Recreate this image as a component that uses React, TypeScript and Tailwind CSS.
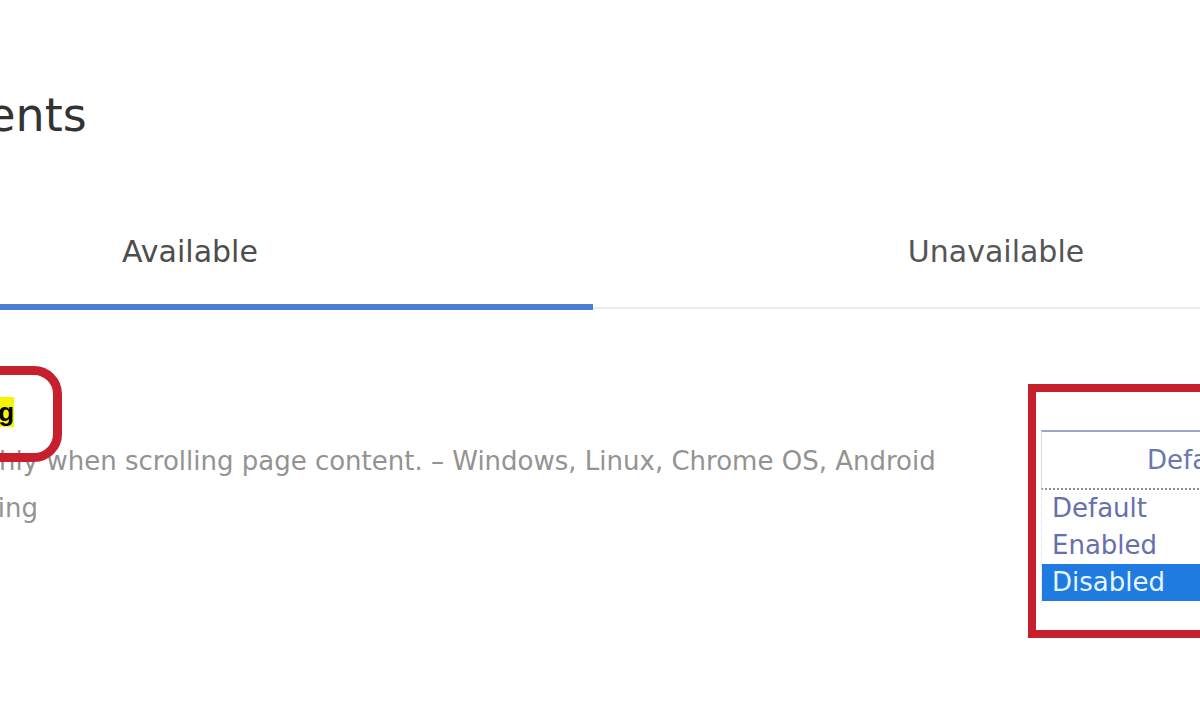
const options = ['Default', 'Enabled', 'Disabled'];

function Tabs() {
    return (
        <nav className="mt-[99px] flex items-start">
            <div className="flex-1 border-b-[6px] border-[#4a80d4] pb-[35px] text-center">
                <span className="text-[30px] leading-[30px] text-[#4d4d4d]">Available</span>
            </div>
            <div className="flex-1 border-b-2 border-[#ebebeb] pb-[38px] text-center">
                <span className="text-[30px] leading-[30px] text-[#555]">Unavailable</span>
            </div>
        </nav>
    );
}

function FlagSelect() {
    return (
        <div className="relative mt-[31px] mr-[52px] w-[306px]">
            <div className="flex h-[58px] items-center justify-center border-t-2 border-l border-t-[#9ba7c6] border-l-[#d4d8e4] bg-white">
                <span className="text-[26px] leading-[26px] text-[#6a78b0]">Default</span>
            </div>
            <ul className="absolute top-full left-0 w-full border-t-2 border-l border-dotted border-t-[#8d8d95] border-l-[#d4d8e4] bg-white pb-[4px]">
                {options.map((opt) => {
                    const selected = opt === 'Disabled';
                    return (
                        <li
                            key={opt}
                            className={
                                selected
                                    ? 'h-[37px] bg-[#1f7be0] pl-[10px] text-[26px] leading-[37px] text-[#e6f5ff]'
                                    : 'h-[37px] pl-[10px] text-[26px] leading-[37px] text-[#6670ad]'
                            }
                        >
                            {opt}
                        </li>
                    );
                })}
            </ul>
        </div>
    );
}

function Experiment() {
    return (
        <section className="mt-[89px] ml-[14px] flex items-start">
            <div className="flex-1">
                <h3 className="-ml-[2px] font-['Liberation_Sans',Arial,sans-serif] text-[26px] leading-[26px] font-bold text-black">
                    <mark className="bg-[#f6f500] text-black">Smooth Scrolling</mark>
                </h3>
                <p className="mt-[23px] text-[26px] leading-[26px] text-[#939393]">
                    Animate smoothly when scrolling page content. – Windows, Linux, Chrome OS, Android
                </p>
                <p className="mt-[21px] text-[26px] leading-[26px] text-[#939393]">#smooth-scrolling</p>
            </div>
            <FlagSelect />
        </section>
    );
}

export default function App() {
    return (
        <div className="relative h-[720px] w-[1200px] overflow-hidden bg-white font-['DejaVu_Sans',Verdana,sans-serif]">
            <div className="-ml-[213px] flex w-[1612px] flex-col">
                <header className="pt-[92px] pl-[10px]">
                    <h1 className="text-[46px] leading-[46px] text-[#333]">Experiments</h1>
                </header>
                <Tabs />
                <Experiment />
            </div>

            {/* red annotations */}
            <div className="pointer-events-none absolute top-[366px] left-[-40px] h-[96px] w-[102px] rounded-[28px] border-[9px] border-[#c61f2e]" />
            <div className="pointer-events-none absolute top-[384px] left-[1028px] h-[254px] w-[220px] border-[8px] border-[#c61f2e]" />
        </div>
    );
}
